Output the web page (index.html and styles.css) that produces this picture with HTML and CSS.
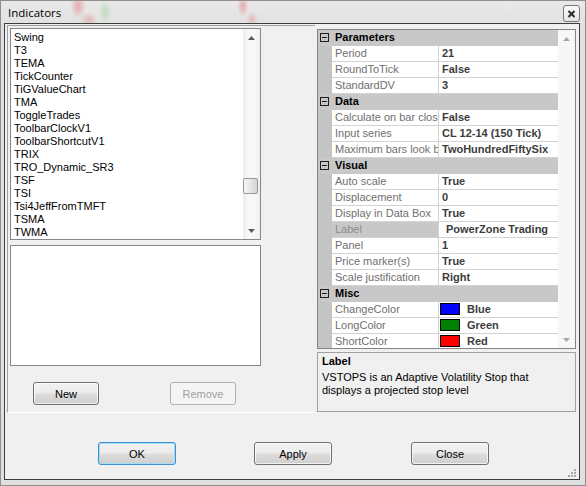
FILE: index.html
```html
<!DOCTYPE html>
<html>
<head>
<meta charset="utf-8">
<title>Indicators</title>
<link rel="stylesheet" href="styles.css">
</head>
<body>
<div class="window">
  <div class="titlebar">
    <span class="title">Indicators</span>
    <div class="closebtn">
      <svg width="9" height="8" viewBox="0 0 9 8"><path d="M1.5 1 L7.5 7 M7.5 1 L1.5 7" stroke="#2b2b2b" stroke-width="2" fill="none"/></svg>
    </div>
  </div>
  <div class="client">
    <div class="main">
      <div class="leftpanel">
        <div class="listbox">
          <ul class="items">
            <li>Swing</li>
            <li>T3</li>
            <li>TEMA</li>
            <li>TickCounter</li>
            <li>TiGValueChart</li>
            <li>TMA</li>
            <li>ToggleTrades</li>
            <li>ToolbarClockV1</li>
            <li>ToolbarShortcutV1</li>
            <li>TRIX</li>
            <li>TRO_Dynamic_SR3</li>
            <li>TSF</li>
            <li>TSI</li>
            <li>Tsi4JeffFromTMFT</li>
            <li>TSMA</li>
            <li>TWMA</li>
          </ul>
          <div class="vscroll">
            <div class="sbtn"><svg width="7" height="4" viewBox="0 0 7 4"><path d="M0 4 L3.5 0 L7 4 Z" fill="#5a5a5a"/></svg></div>
            <div class="track"><div class="thumb"></div></div>
            <div class="sbtn"><svg width="7" height="4" viewBox="0 0 7 4"><path d="M0 0 L7 0 L3.5 4 Z" fill="#5a5a5a"/></svg></div>
          </div>
        </div>
        <div class="textbox"></div>
        <div class="lbtns">
          <button class="btn small">New</button>
          <button class="btn small" disabled>Remove</button>
        </div>
      </div>
      <div class="rightpanel">
        <div class="pgrid">
          <div class="rows">
            <div class="cat"><span class="g"><svg width="9" height="9" viewBox="0 0 9 9"><rect x="0.5" y="0.5" width="8" height="8" fill="none" stroke="#1e1e1e"/><path d="M2 4.5 H7" stroke="#1e1e1e"/></svg></span><span class="ct">Parameters</span></div>
            <div class="row"><span class="g"></span><span class="n">Period</span><span class="v">21</span></div>
            <div class="row"><span class="g"></span><span class="n">RoundToTick</span><span class="v">False</span></div>
            <div class="row"><span class="g"></span><span class="n">StandardDV</span><span class="v">3</span></div>
            <div class="cat"><span class="g"><svg width="9" height="9" viewBox="0 0 9 9"><rect x="0.5" y="0.5" width="8" height="8" fill="none" stroke="#1e1e1e"/><path d="M2 4.5 H7" stroke="#1e1e1e"/></svg></span><span class="ct">Data</span></div>
            <div class="row"><span class="g"></span><span class="n">Calculate on bar close</span><span class="v">False</span></div>
            <div class="row"><span class="g"></span><span class="n">Input series</span><span class="v">CL 12-14 (150 Tick)</span></div>
            <div class="row"><span class="g"></span><span class="n">Maximum bars look back</span><span class="v">TwoHundredFiftySix</span></div>
            <div class="cat"><span class="g"><svg width="9" height="9" viewBox="0 0 9 9"><rect x="0.5" y="0.5" width="8" height="8" fill="none" stroke="#1e1e1e"/><path d="M2 4.5 H7" stroke="#1e1e1e"/></svg></span><span class="ct">Visual</span></div>
            <div class="row"><span class="g"></span><span class="n">Auto scale</span><span class="v">True</span></div>
            <div class="row"><span class="g"></span><span class="n">Displacement</span><span class="v">0</span></div>
            <div class="row"><span class="g"></span><span class="n">Display in Data Box</span><span class="v">True</span></div>
            <div class="row sel"><span class="g"></span><span class="n">Label</span><span class="v">PowerZone Trading</span></div>
            <div class="row"><span class="g"></span><span class="n">Panel</span><span class="v">1</span></div>
            <div class="row"><span class="g"></span><span class="n">Price marker(s)</span><span class="v">True</span></div>
            <div class="row"><span class="g"></span><span class="n">Scale justification</span><span class="v">Right</span></div>
            <div class="cat"><span class="g"><svg width="9" height="9" viewBox="0 0 9 9"><rect x="0.5" y="0.5" width="8" height="8" fill="none" stroke="#1e1e1e"/><path d="M2 4.5 H7" stroke="#1e1e1e"/></svg></span><span class="ct">Misc</span></div>
            <div class="row"><span class="g"></span><span class="n">ChangeColor</span><span class="v"><i class="sw blue"></i>Blue</span></div>
            <div class="row"><span class="g"></span><span class="n">LongColor</span><span class="v"><i class="sw green"></i>Green</span></div>
            <div class="row"><span class="g"></span><span class="n">ShortColor</span><span class="v"><i class="sw red"></i>Red</span></div>
          </div>
          <div class="vscroll pg">
            <div class="sbtn"><svg width="7" height="4" viewBox="0 0 7 4"><path d="M0 4 L3.5 0 L7 4 Z" fill="#a8a8a8"/></svg></div>
            <div class="track"></div>
            <div class="sbtn"><svg width="7" height="4" viewBox="0 0 7 4"><path d="M0 0 L7 0 L3.5 4 Z" fill="#a8a8a8"/></svg></div>
          </div>
        </div>
        <div class="desc">
          <div class="dtitle">Label</div>
          <div class="dtext">VSTOPS is an Adaptive Volatility Stop that<br>displays a projected stop level</div>
        </div>
      </div>
    </div>
    <div class="footer">
      <button class="btn big default">OK</button>
      <button class="btn big apply">Apply</button>
      <button class="btn big close">Close</button>
    </div>
    <div class="grip">
      <svg width="9" height="9" viewBox="0 0 9 9" fill="#a9a9a9">
        <rect x="7" y="1" width="2" height="2"/>
        <rect x="4" y="4" width="2" height="2"/><rect x="7" y="4" width="2" height="2"/>
        <rect x="1" y="7" width="2" height="2"/><rect x="4" y="7" width="2" height="2"/><rect x="7" y="7" width="2" height="2"/>
      </svg>
    </div>
  </div>
</div>
</body>
</html>
```

FILE: styles.css
```css
html, body {
  margin: 0;
  padding: 0;
}
body {
  width: 586px;
  height: 486px;
  overflow: hidden;
  background: #dedede;
}
.window {
  box-sizing: border-box;
  width: 586px;
  height: 486px;
  border: 1px solid #8f8f8f;
  background: #e0e0e0;
  display: flex;
  flex-direction: column;
  font-family: "Liberation Sans", Arial, sans-serif;
  font-size: 11px;
  color: #000;
}
.titlebar {
  height: 22px;
  flex: none;
  display: flex;
  align-items: flex-start;
  background:
    radial-gradient(ellipse 8px 13px at 77px 5px, rgba(225, 80, 80, 0.40), rgba(225, 80, 80, 0)),
    radial-gradient(ellipse 9px 8px at 88px 19px, rgba(225, 80, 80, 0.30), rgba(225, 80, 80, 0)),
    radial-gradient(ellipse 7px 12px at 104px 10px, rgba(90, 190, 90, 0.28), rgba(90, 190, 90, 0)),
    radial-gradient(ellipse 6px 11px at 242px 5px, rgba(225, 80, 80, 0.40), rgba(225, 80, 80, 0)),
    radial-gradient(ellipse 6px 7px at 251px 18px, rgba(225, 80, 80, 0.30), rgba(225, 80, 80, 0)),
    linear-gradient(#e9e9e9, #e2e2e2);
}
.title {
  font-family: "Open Sans", "Noto Sans", sans-serif;
  font-size: 11.5px;
  line-height: 16px;
  margin: 4px 0 0 7px;
  color: #000;
}
.closebtn {
  box-sizing: border-box;
  width: 17px;
  height: 17px;
  margin: 4px 5px 0 auto;
  border: 1px solid #777;
  border-radius: 3px;
  background: linear-gradient(#fafafa, #e4e4e4);
  display: flex;
  align-items: center;
  justify-content: center;
}
.client {
  position: relative;
  box-sizing: border-box;
  height: 457px;
  margin: 0 5px 5px 3px;
  border: 1px solid #3d3d3d;
  background: #f0f0f0;
  display: flex;
  flex-direction: column;
}
.main {
  display: flex;
  height: 389px;
  flex: none;
}
.leftpanel {
  box-sizing: border-box;
  width: 308px;
  height: 388px;
  margin: 1px 0 0 2px;
  border-left: 1px solid #a0a0a0;
  border-top: 1px solid #a0a0a0;
  border-bottom: 1px solid #ffffff;
  padding: 2px 0 0 2px;
  display: flex;
  flex-direction: column;
}
.listbox {
  box-sizing: border-box;
  width: 251px;
  height: 212px;
  border: 1px solid #828790;
  background: #fff;
  display: flex;
}
.items {
  list-style: none;
  margin: 0;
  padding: 2px 0 0 3px;
  flex: 1;
  overflow: hidden;
}
.items li {
  height: 13px;
  line-height: 13px;
  white-space: nowrap;
}
.vscroll {
  width: 17px;
  flex: none;
  display: flex;
  flex-direction: column;
  background: linear-gradient(90deg, #ececec, #f8f8f8 30%, #f8f8f8 70%, #efefef);
}
.vscroll.pg {
  background: #f7f7f7;
}
.sbtn {
  height: 17px;
  flex: none;
  display: flex;
  align-items: center;
  justify-content: center;
}
.track {
  flex: 1;
}
.thumb {
  box-sizing: border-box;
  height: 16px;
  margin: 132px 2px 0 0;
  border: 1px solid #969696;
  border-radius: 2px;
  background: linear-gradient(90deg, #f6f6f6, #e6e6e6 50%, #d6d6d6);
}
.textbox {
  box-sizing: border-box;
  width: 251px;
  height: 121px;
  margin-top: 5px;
  border: 1px solid #828790;
  background: #fff;
}
.lbtns {
  display: flex;
  margin-top: 16px;
  padding-left: 23px;
  gap: 71px;
}
.btn {
  box-sizing: border-box;
  height: 23px;
  padding: 0;
  border: 1px solid #707070;
  border-radius: 3px;
  background: linear-gradient(#f3f3f3 0%, #ebebeb 48%, #dddddd 52%, #cfcfcf 100%);
  font-family: "Liberation Sans", Arial, sans-serif;
  font-size: 11px;
  color: #000;
  box-shadow: inset 0 0 0 1px rgba(255, 255, 255, 0.7);
}
.btn.small {
  width: 66px;
}
.btn.big {
  width: 78px;
}
.btn:disabled {
  border-color: #adb2b5;
  background: #f4f4f4;
  color: #a0a0a0;
  box-shadow: none;
}
.btn.default {
  border-color: #3c8fd0;
  box-shadow: inset 0 0 0 1px #a3dcf6;
}
.btn.apply {
  margin-left: 78px;
}
.btn.close {
  margin-left: 79px;
}
.rightpanel {
  width: 259px;
  margin: 5px 0 0 2px;
  display: flex;
  flex-direction: column;
}
.pgrid {
  box-sizing: border-box;
  height: 320px;
  border: 1px solid #848484;
  background: #fff;
  display: flex;
}
.rows {
  width: 240px;
  flex: none;
  overflow: hidden;
  background: #c4c4c4;
}
.row, .cat {
  display: flex;
  height: 16px;
  line-height: 15px;
  white-space: nowrap;
}
.cat {
  background: #c8c8c8;
  font-weight: bold;
  color: #000;
}
.g {
  width: 14px;
  flex: none;
  display: flex;
}
.cat .g svg {
  margin: 3px 0 0 2px;
}
.ct {
  padding-left: 3px;
}
.n {
  box-sizing: border-box;
  width: 107px;
  height: 16px;
  flex: none;
  overflow: hidden;
  padding-left: 3px;
  background: #fff;
  color: #6f6f6f;
  border-right: 1px solid #d3d3d3;
  border-bottom: 1px solid #d3d3d3;
}
.v {
  box-sizing: border-box;
  flex: 1;
  height: 16px;
  overflow: hidden;
  padding-left: 3px;
  background: #fff;
  color: #3c3c3c;
  font-weight: bold;
  border-bottom: 1px solid #d3d3d3;
  display: flex;
}
.row.sel .n {
  background: #c8c8c8;
  color: #8c8c8c;
}
.row.sel .v {
  padding-left: 7px;
}
.sw {
  box-sizing: border-box;
  width: 20px;
  height: 12px;
  margin: 1px 7px 0 -2px;
  border: 1px solid #000;
  flex: none;
}
.sw.blue { background: #0000ff; }
.sw.green { background: #008000; }
.sw.red { background: #ff0000; }
.desc {
  box-sizing: border-box;
  height: 60px;
  margin-top: 3px;
  border: 1px solid #a0a0a0;
  padding: 2px 4px;
  line-height: 13px;
  color: #000;
}
.dtitle {
  font-weight: bold;
  margin-bottom: 3px;
}
.footer {
  display: flex;
  margin-top: 29px;
  padding-left: 93px;
}
.grip {
  position: absolute;
  right: 3px;
  bottom: 2px;
  width: 9px;
  height: 9px;
  display: flex;
}
```
